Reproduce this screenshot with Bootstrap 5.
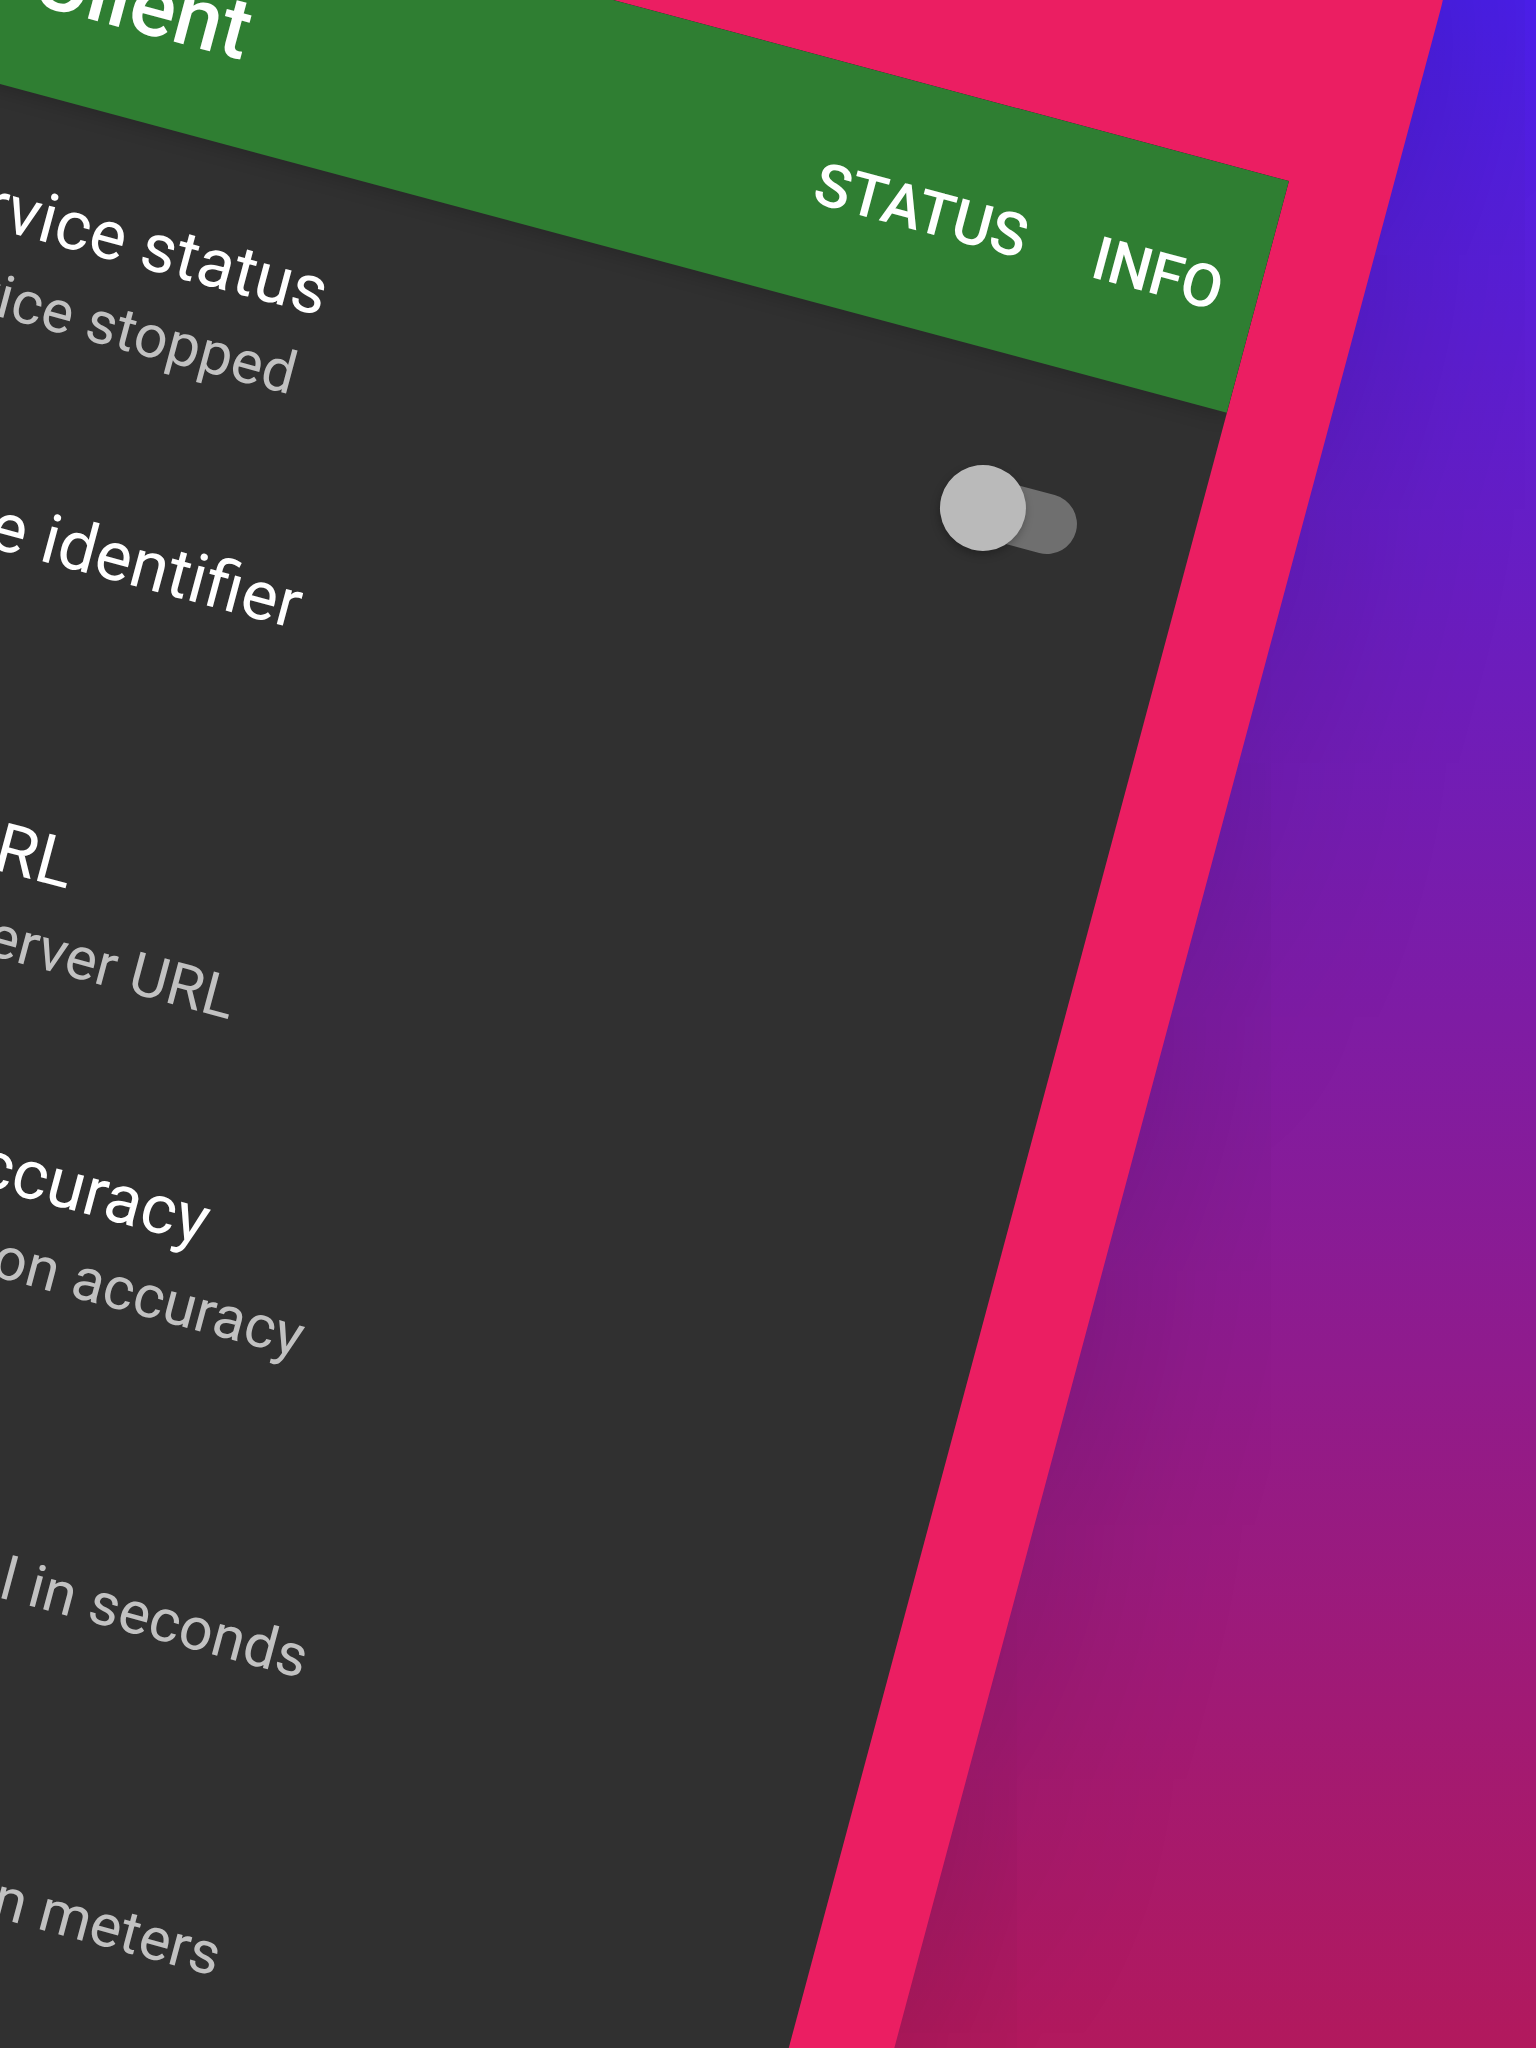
<!DOCTYPE html>
<html lang="en">
<head>
<meta charset="utf-8">
<meta name="viewport" content="width=device-width, initial-scale=1">
<title>Traccar Client</title>
<link href="https://cdn.jsdelivr.net/npm/bootstrap@5.3.0/dist/css/bootstrap.min.css" rel="stylesheet">
<style>
  body { margin: 0; font-family: Roboto, "Liberation Sans", sans-serif; }
  .stage { width: 1536px; height: 2048px; background: linear-gradient(#4b1fea, #b2195d); }
  /* handset lying on the backdrop, turned about the screen's top right corner */
  .device {
    left: -458px; top: -146px; width: 1849px; padding: 327px 102px;
    background: #eb1e62; border-radius: 120px;
    box-shadow: 0 0 220px rgba(0,0,0,.19);
    transform: rotate(15deg); transform-origin: 1747px 327px;
  }
  .device-screen { height: 2924px; background: #303030; }
  .app-bar { height: 239.6px; padding: 8px 37px 0 70px; background: #2f7e32; box-shadow: 0 3px 20px rgba(0,0,0,.2); z-index: 1; }
  .app-title { font-size: 85.6px; font-weight: 500; line-height: 100px; padding-top: 3px; }
  .app-menu { gap: 70px; font-size: 59.9px; font-weight: 500; line-height: 70px; }
  .menu-tight { letter-spacing: -.5px; }
  .pref-row { height: 309.4px; padding-left: 311.5px; padding-right: 115px; }
  .pref-copy { padding-top: 78.2px; white-space: nowrap; }
  .pref-name { font-size: 68.5px; line-height: 80px; color: #fff; padding-left: 3px; }
  .pref-note { font-size: 59.4px; line-height: 70px; margin-top: 12px; color: #c1c1c1; padding-left: 1px; }
  .toggle-track { width: 122px; height: 60px; border-radius: 30px; background: #6f6f6f; }
  .toggle-thumb { left: -17px; top: -12.5px; width: 86px; height: 86px; background: #bababa; box-shadow: 0 4px 8px rgba(0,0,0,.26); }
</style>
</head>
<body>
<main class="stage position-relative overflow-hidden">
  <div class="device position-absolute">
    <div class="device-screen overflow-hidden">
      <header class="app-bar position-relative d-flex align-items-center justify-content-between text-white">
        <div class="app-title">Traccar Client</div>
        <nav class="app-menu d-flex"><span>STATUS</span><span class="menu-tight">INFO</span></nav>
      </header>
      <section class="d-flex flex-column">
        <div class="pref-row d-flex justify-content-between">
          <div class="pref-copy"><div class="pref-name">Service status</div><div class="pref-note">Service stopped</div></div>
          <div class="toggle-track position-relative align-self-center"><div class="toggle-thumb position-absolute rounded-circle"></div></div>
        </div>
        <div class="pref-row"><div class="pref-copy"><div class="pref-name">Device identifier</div><div class="pref-note">123456</div></div></div>
        <div class="pref-row"><div class="pref-copy"><div class="pref-name">Server URL</div><div class="pref-note">Tracking server URL</div></div></div>
        <div class="pref-row"><div class="pref-copy"><div class="pref-name">Location accuracy</div><div class="pref-note">Desired location accuracy</div></div></div>
        <div class="pref-row"><div class="pref-copy"><div class="pref-name">Frequency</div><div class="pref-note">Reporting interval in seconds</div></div></div>
        <div class="pref-row"><div class="pref-copy"><div class="pref-name">Distance</div><div class="pref-note">Reporting distance in meters</div></div></div>
      </section>
    </div>
  </div>
</main>
<script src="https://cdn.jsdelivr.net/npm/bootstrap@5.3.0/dist/js/bootstrap.bundle.min.js"></script>
</body>
</html>
